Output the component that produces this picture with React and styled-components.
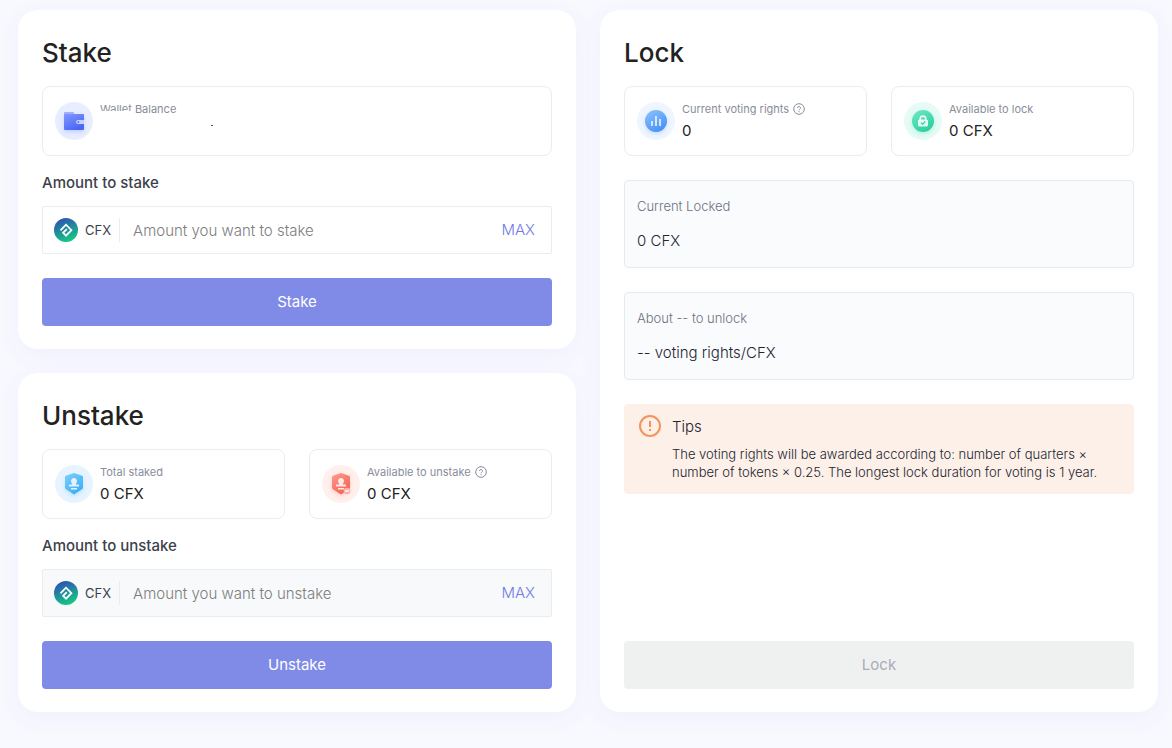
import React, { useId } from "react";
import styled, { createGlobalStyle } from "styled-components";

const GlobalStyle = createGlobalStyle`
  *, *::before, *::after { box-sizing: border-box; }
  body {
    margin: 0;
    background: #f8f9fe;
    color: #222222;
    font-family: Inter, "Liberation Sans", sans-serif;
    font-size: 15px;
    font-weight: 300;
  }
  h1, h2, p, dl, dt, dd { margin: 0; }
  button, input { font: inherit; }
`;

const Page = styled.main`
  display: grid;
  grid-template-columns: repeat(2, minmax(0, 1fr));
  gap: 24px;
  padding: 10px 14px 36px 18px;
`;

const Column = styled.div`
  display: flex;
  flex-direction: column;
  gap: 24px;
`;

const Card = styled.section`
  display: flex;
  flex-direction: column;
  flex: 1 0 auto;
  padding: 24px 24px 23px;
  background: #ffffff;
  border-radius: 20px;
  box-shadow: 0 6px 24px rgba(84, 84, 255, 0.06);
`;

const Title = styled.h2`
  margin-bottom: 14px;
  font-size: 26px;
  font-weight: 500;
  line-height: 38px;
`;

const StatRow = styled.div`
  display: flex;
  gap: 24px;
`;

const StatBox = styled.div`
  display: flex;
  align-items: center;
  flex: 1;
  gap: 7px;
  height: 70px;
  padding: 0 12px;
  border: 1px solid #ebeced;
  border-radius: 8px;
`;

const StatText = styled.dl`
  position: relative;
  flex: 1;
`;

const StatLabel = styled.dt`
  display: flex;
  align-items: center;
  gap: 4px;
  color: #898d9a;
  font-size: 11px;
  font-weight: 400;
  line-height: 18px;
`;

const StatValue = styled.dd`
  min-height: 24px;
  padding-top: 1px;
  font-size: 15px;
  font-weight: 400;
  line-height: 24px;
`;

const Redaction = styled.span`
  position: absolute;
  top: 11px;
  left: 0;
  width: 32px;
  height: 24px;
  background: #ffffff;
`;

const Speck = styled.span`
  position: absolute;
  top: 25px;
  left: 111px;
  width: 2px;
  height: 1px;
  background: #555555;
`;

const FieldLabel = styled.label`
  margin: 16px 0 12px;
  color: #3d3f4c;
  font-size: 15px;
  font-weight: 500;
  line-height: 22px;
`;

const Field = styled.div`
  display: flex;
  align-items: center;
  height: 48px;
  margin-bottom: 24px;
  padding: 0 11px;
  background: ${(p) => (p.$muted ? "#f7f9fa" : "#ffffff")};
  border: 1px solid #ebeced;
  border-radius: 2px;
`;

const Token = styled.span`
  display: flex;
  align-items: center;
  gap: 7px;
  height: 24px;
  padding-right: 8px;
  border-right: 1px solid #ebeced;
  color: #3d3f4c;
  font-size: 13px;
  font-weight: 400;
`;

const AmountInput = styled.input`
  flex: 1;
  min-width: 0;
  padding: 0 13px;
  background: transparent;
  border: 0;
  outline: 0;
  font-size: 15px;
  &::placeholder { color: #7d7d7d; opacity: 1; }
`;

const MaxButton = styled.button`
  padding: 0 5px 2px;
  background: none;
  border: 0;
  color: #6f7be3;
  font-size: 15px;
`;

const ActionButton = styled.button`
  height: 48px;
  margin-top: auto;
  padding: 0 0 2px;
  background: #808be7;
  border: 0;
  border-radius: 4px;
  color: #ffffff;
  font-size: 15px;
  font-weight: 400;
  &:disabled { background: #eff1f1; color: #aaacb5; }
`;

const InfoBox = styled.dl`
  height: 88px;
  margin-top: 24px;
  padding: 15px 12px;
  background: #fafbfd;
  border: 1px solid #e8eaed;
  border-radius: 4px;
`;

const InfoLabel = styled.dt`
  margin-bottom: 13px;
  color: #6c707f;
  font-size: 13px;
  line-height: 20px;
`;

const InfoValue = styled.dd`
  color: #222430;
  font-size: 15px;
  line-height: 24px;
`;

const Tips = styled.aside`
  display: flex;
  gap: 10px;
  margin: 24px 0;
  padding: 10px 14px 13px;
  background: #fcf0e8;
  border-radius: 4px;
  color: #222430;
`;

const TipsTitle = styled.p`
  margin-bottom: 6px;
  font-size: 15px;
  line-height: 25px;
`;

const TipsText = styled.p`
  font-size: 13px;
  line-height: 18px;
`;

const Icon = styled.svg`
  display: block;
  flex: none;
`;

function Badge({ halo, from, to, children }) {
  const id = useId();
  return (
    <Icon width="38" height="38" viewBox="0 0 38 38" aria-hidden="true">
      <defs>
        <linearGradient id={id} x1="0" y1="0" x2="0.6" y2="1">
          <stop offset="0" stopColor={from} />
          <stop offset="1" stopColor={to} />
        </linearGradient>
        <filter id={`${id}s`} x="-40%" y="-40%" width="180%" height="180%">
          <feDropShadow dx="0" dy="2" stdDeviation="2" floodColor={to} floodOpacity="0.25" />
        </filter>
      </defs>
      <circle cx="19" cy="19" r="19" fill={halo} />
      {children(`url(#${id})`, `url(#${id}s)`)}
    </Icon>
  );
}

const WalletIcon = () => (
  <Badge halo="#e8eeff" from="#8398ff" to="#4a66f5">
    {(fill, shadow) => (
      <>
        <path d="M9 12v-1q0-1 1-1h8q1 0 1 1v2H9z" fill="#a3b0fb" />
        <path d="M9 12h19q1 0 1 1v14q0 1-1 1H10q-1 0-1-1z" fill={fill} filter={shadow} />
        <path d="M29 18h-6a2 2 0 0 0 0 4h6z" fill="#c5d2ff" />
        <circle cx="23.300" cy="20" r="1" fill="#5a72f8" />
      </>
    )}
  </Badge>
);

const shield = "M19 8l8 2.700q1 .4 1 1.400v10.400q0 1.200-1 1.800L19 29.500l-8-5.200q-1-.6-1-1.800V12.100q0-1 1-1.400z";

const Stamp = () => (
  <>
    <path d="M19 13a3 3 0 0 1 2.700 4.300l-1 2.200h2.800q.5 0 .5.500V21.500H14V20q0-.5.500-.5h2.800l-1-2.200A3 3 0 0 1 19 13z" fill="#fff" opacity=".82" />
    <path d="M16 23h6v1.500h-6z" fill="#fff" opacity=".88" />
  </>
);

const StakedIcon = () => (
  <Badge halo="#e7f4ff" from="#82cdfb" to="#3daff5">
    {(fill, shadow) => (
      <>
        <path d={shield} fill={fill} filter={shadow} />
        <Stamp />
      </>
    )}
  </Badge>
);

const UnstakeIcon = () => (
  <Badge halo="#fff0ed" from="#ff9c90" to="#f66452">
    {(fill, shadow) => (
      <>
        <path d={shield} fill={fill} filter={shadow} />
        <Stamp />
        <circle cx="25" cy="26" r="3.300" fill="#ffb0a5" />
        <path d="M23 25.300h4v1.400h-4z" fill="#fff" />
      </>
    )}
  </Badge>
);

const VotingIcon = () => (
  <Badge halo="#eff6ff" from="#8fc2ff" to="#4794f5">
    {(fill, shadow) => (
      <>
        <circle cx="19" cy="19" r="11" fill={fill} filter={shadow} />
        <path d="M15 19v5M19 14v10M23 17v7" stroke="#fff" strokeWidth="1.800" opacity=".8" />
      </>
    )}
  </Badge>
);

const LockIcon = () => (
  <Badge halo="#e6fbf5" from="#75e8c6" to="#2ad0a0">
    {(fill, shadow) => (
      <>
        <circle cx="19" cy="19" r="11" fill={fill} filter={shadow} />
        <path d="M16.200 18.500V17a2.800 2.800 0 0 1 5.600 0v1.500" fill="none" stroke="#fff" strokeWidth="1.700" opacity=".85" />
        <rect x="14" y="17.500" width="10" height="7" rx="1.500" fill="#fff" opacity=".85" />
        <path d="M17 20.700l1.600 1.500 2.700-2.700" fill="none" stroke="#35cfa2" strokeWidth="1.300" />
      </>
    )}
  </Badge>
);

function TokenLogo() {
  const id = useId();
  return (
    <Icon width="24" height="24" viewBox="0 0 24 24" aria-hidden="true">
      <defs>
        <linearGradient id={id} x1="0.300" y1="0" x2="0.700" y2="1">
          <stop offset="0" stopColor="#2d50b4" />
          <stop offset="1" stopColor="#13cf82" />
        </linearGradient>
      </defs>
      <circle cx="12" cy="12" r="12" fill={`url(#${id})`} />
      <path d="M6.500 12.300L12 6.700l5.400 5.500L12 17.700l-2.900-2.900 3.700-3.700" fill="none" stroke="#fff" strokeWidth="1.800" />
    </Icon>
  );
}

const HelpIcon = () => (
  <Icon width="12" height="12" viewBox="0 0 12 12" fill="none" stroke="#898d9a" role="img" aria-label="Help">
    <circle cx="6" cy="6" r="5.300" />
    <path d="M4.500 5a1.500 1.500 0 1 1 2.200 1.300q-.7.300-.7 1M6 8.200v1" />
  </Icon>
);

const AlertIcon = () => (
  <Icon width="24" height="24" viewBox="0 0 24 24" fill="none" stroke="#f5935b" strokeWidth="2" aria-hidden="true">
    <circle cx="12" cy="12" r="10" />
    <path d="M12 7v6M12 15v2" />
  </Icon>
);

function Stat({ icon, label, value, help, children }) {
  return (
    <StatBox>
      {icon}
      <StatText>
        <StatLabel>{label}{help && <HelpIcon />}</StatLabel>
        <StatValue>{value}</StatValue>
        {children}
      </StatText>
    </StatBox>
  );
}

function AmountField({ id, label, placeholder, muted }) {
  return (
    <>
      <FieldLabel htmlFor={id}>{label}</FieldLabel>
      <Field $muted={muted}>
        <Token><TokenLogo />CFX</Token>
        <AmountInput id={id} placeholder={placeholder} />
        <MaxButton type="button">MAX</MaxButton>
      </Field>
    </>
  );
}

export default function App() {
  return (
    <>
      <GlobalStyle />
      <Page>
        <Column>
          <Card>
            <Title>Stake</Title>
            <StatRow>
              <Stat icon={<WalletIcon />} label="Wallet Balance">
                <Redaction />
                <Speck />
              </Stat>
            </StatRow>
            <AmountField id="stake-amount" label="Amount to stake" placeholder="Amount you want to stake" />
            <ActionButton type="button">Stake</ActionButton>
          </Card>
          <Card>
            <Title>Unstake</Title>
            <StatRow>
              <Stat icon={<StakedIcon />} label="Total staked" value="0 CFX" />
              <Stat icon={<UnstakeIcon />} label="Available to unstake" value="0 CFX" help />
            </StatRow>
            <AmountField id="unstake-amount" label="Amount to unstake" placeholder="Amount you want to unstake" muted />
            <ActionButton type="button">Unstake</ActionButton>
          </Card>
        </Column>
        <Card>
          <Title>Lock</Title>
          <StatRow>
            <Stat icon={<VotingIcon />} label="Current voting rights" value="0" help />
            <Stat icon={<LockIcon />} label="Available to lock" value="0 CFX" />
          </StatRow>
          <InfoBox>
            <InfoLabel>Current Locked</InfoLabel>
            <InfoValue>0 CFX</InfoValue>
          </InfoBox>
          <InfoBox>
            <InfoLabel>About -- to unlock</InfoLabel>
            <InfoValue>-- voting rights/CFX</InfoValue>
          </InfoBox>
          <Tips>
            <AlertIcon />
            <div>
              <TipsTitle>Tips</TipsTitle>
              <TipsText>
                The voting rights will be awarded according to: number of quarters × number of tokens × 0.25. The longest lock duration for voting is 1 year.
              </TipsText>
            </div>
          </Tips>
          <ActionButton type="button" disabled>Lock</ActionButton>
        </Card>
      </Page>
    </>
  );
}
